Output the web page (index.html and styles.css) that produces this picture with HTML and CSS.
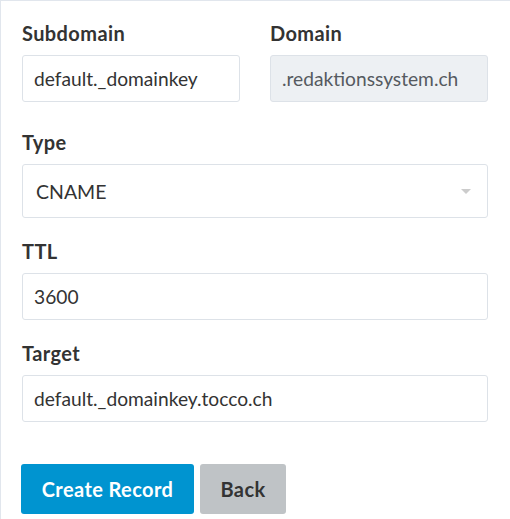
FILE: index.html
```html
<!DOCTYPE html>
<html lang="en">
<head>
<meta charset="utf-8">
<title>Create Record</title>
<link rel="stylesheet" href="styles.css">
</head>
<body>
<div class="panel">
  <form class="form">
    <div class="row-two">
      <div class="field">
        <label class="label">Subdomain</label>
        <input class="input" type="text" value="default._domainkey">
      </div>
      <div class="field">
        <label class="label">Domain</label>
        <input class="input input-disabled" type="text" value=".redaktionssystem.ch" disabled>
      </div>
    </div>
    <div class="field">
      <label class="label">Type</label>
      <div class="select">
        <span class="select-value">CNAME</span>
        <span class="select-arrow"></span>
      </div>
    </div>
    <div class="field">
      <label class="label">TTL</label>
      <input class="input" type="text" value="3600">
    </div>
    <div class="field">
      <label class="label">Target</label>
      <input class="input" type="text" value="default._domainkey.tocco.ch">
    </div>
    <div class="actions">
      <button type="button" class="btn btn-primary">Create Record</button>
      <button type="button" class="btn btn-secondary">Back</button>
    </div>
  </form>
</div>
</body>
</html>
```

FILE: styles.css
```css
html, body {
  margin: 0;
  padding: 0;
  background: #ffffff;
}

body {
  font-family: Lato, "Liberation Sans", sans-serif;
  color: #333333;
  width: 510px;
  height: 519px;
  overflow: hidden;
}

.panel {
  box-sizing: border-box;
  height: 519px;
  border-top: 1px solid #e1e6ed;
  border-left: 1px solid #e1e6ed;
  padding: 21px 22px 0 21px;
}

.form {
  display: flex;
  flex-direction: column;
  width: 466px;
}

.row-two {
  display: grid;
  grid-template-columns: 218px 218px;
  column-gap: 30px;
  margin-bottom: 7px;
}

.field {
  display: flex;
  flex-direction: column;
  margin-bottom: 22px;
}

.label {
  font-weight: 700;
  font-size: 20px;
  letter-spacing: 0.4px;
  line-height: 22px;
  color: #333333;
  margin-bottom: 11px;
}

.input {
  box-sizing: border-box;
  width: 100%;
  height: 47px;
  margin: 0;
  padding: 0 11px;
  border: 1px solid #dde2e8;
  border-radius: 3px;
  background: #ffffff;
  font-family: Lato, "Liberation Sans", sans-serif;
  font-size: 19.2px;
  color: #333333;
  outline: none;
}

.input-disabled {
  background: #edf0f3;
  color: #555a60;
  -webkit-text-fill-color: #555a60;
  opacity: 1;
}

.select {
  box-sizing: border-box;
  height: 54px;
  border: 1px solid #dde2e8;
  border-radius: 3px;
  display: flex;
  align-items: center;
  justify-content: space-between;
  padding: 0 16px 0 13px;
}

.select-value {
  font-size: 19.5px;
  color: #333333;
}

.select-arrow {
  width: 0;
  height: 0;
  border-left: 5px solid transparent;
  border-right: 5px solid transparent;
  border-top: 5px solid #cccccc;
  margin-top: 1px;
}

.actions {
  display: flex;
  gap: 6px;
  margin-top: 20px;
  margin-left: -1px;
}

.btn {
  height: 50px;
  border: none;
  border-radius: 3px;
  font-family: Lato, "Liberation Sans", sans-serif;
  font-weight: 700;
  font-size: 20px;
  letter-spacing: 0.4px;
  padding: 0;
  cursor: pointer;
  text-align: center;
}

.btn-primary {
  background: #0094d0;
  color: #ffffff;
  width: 173px;
}

.btn-secondary {
  background: #bfc3c6;
  color: #333333;
  width: 86px;
}
```
